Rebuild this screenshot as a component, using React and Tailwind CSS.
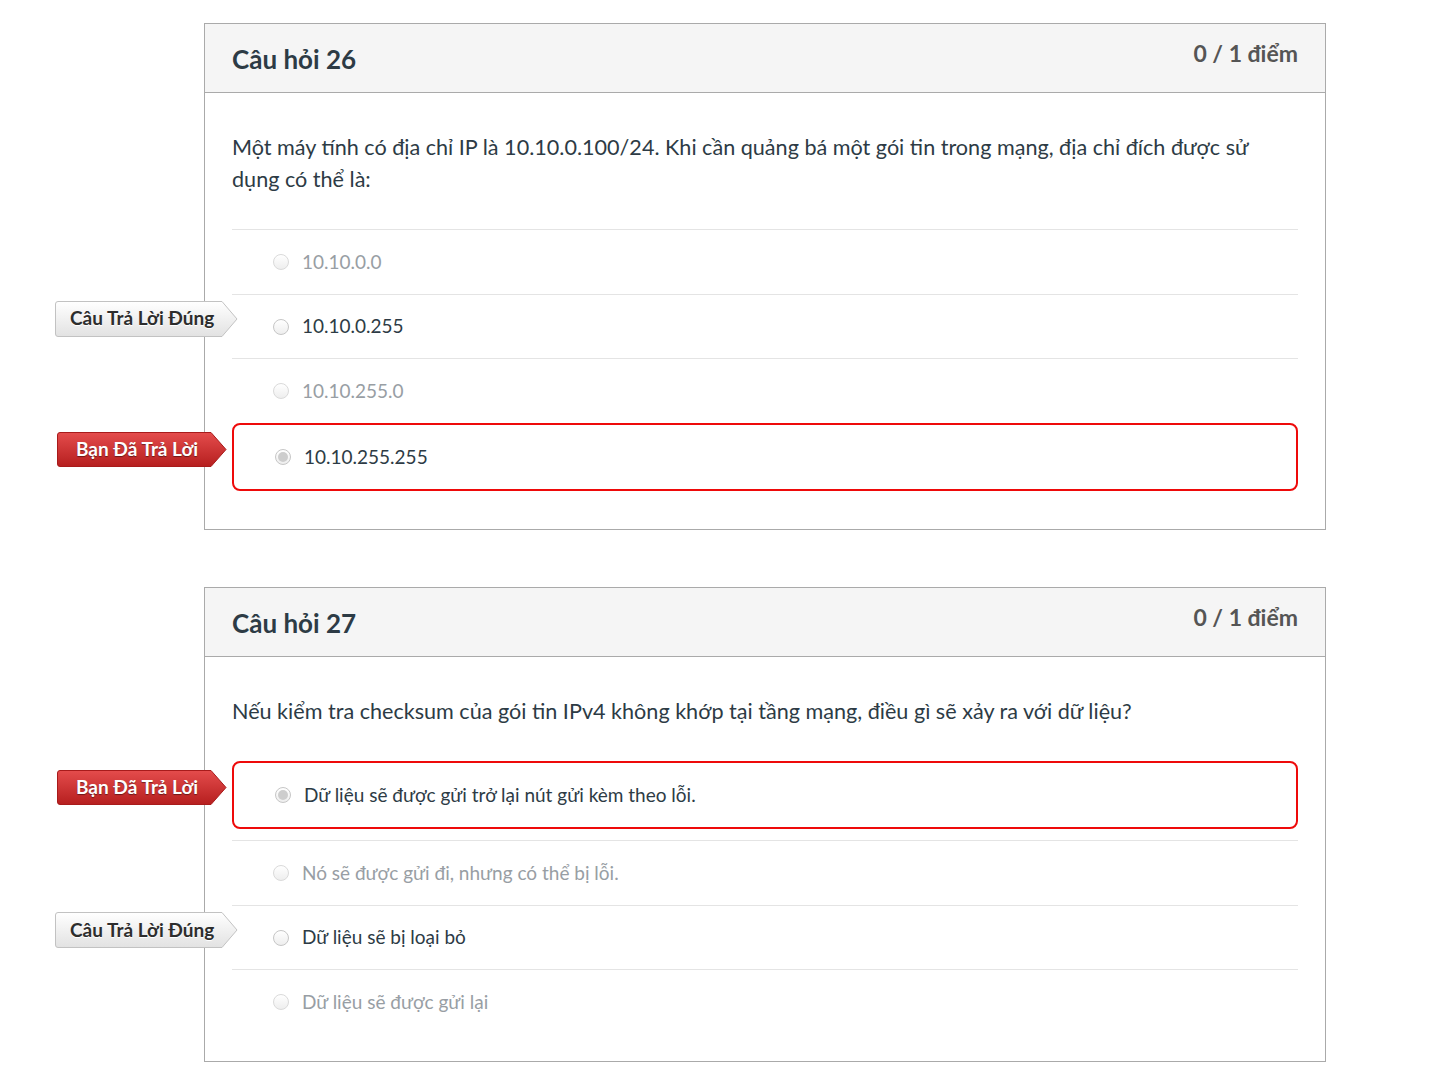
import React from 'react'

const questions = [
  {
    title: 'Câu hỏi 26',
    text: 'Một máy tính có địa chỉ IP là 10.10.0.100/24. Khi cần quảng bá một gói tin trong mạng, địa chỉ đích được sử dụng có thể là:',
    answers: [
      { text: '10.10.0.0' },
      { text: '10.10.0.255', correct: true },
      { text: '10.10.255.0' },
      { text: '10.10.255.255', picked: true },
    ],
  },
  {
    title: 'Câu hỏi 27',
    text: 'Nếu kiểm tra checksum của gói tin IPv4 không khớp tại tầng mạng, điều gì sẽ xảy ra với dữ liệu?',
    answers: [
      { text: 'Dữ liệu sẽ được gửi trở lại nút gửi kèm theo lỗi.', picked: true },
      { text: 'Nó sẽ được gửi đi, nhưng có thể bị lỗi.' },
      { text: 'Dữ liệu sẽ bị loại bỏ', correct: true },
      { text: 'Dữ liệu sẽ được gửi lại' },
    ],
  },
]

function Tag({ red }) {
  const w = red ? 170 : 183
  const h = red ? 35 : 36
  const body = w - 16
  const id = red ? 'tagRed' : 'tagGray'
  return (
    <div
      className={`absolute left-[-177px] flex items-center ${red ? 'top-[7px]' : 'top-[6px]'}`}
      style={{ width: w, height: h }}
    >
      {/* arrow-shaped badge background */}
      <svg className="absolute inset-0" width={w} height={h} viewBox={`0 0 ${w} ${h}`}>
        <defs>
          <linearGradient id={id} x1="0" y1="0" x2="0" y2="1">
            <stop offset="0" stopColor={red ? '#e44c4c' : '#ffffff'} />
            <stop offset="1" stopColor={red ? '#b61f1f' : '#e2e2e2'} />
          </linearGradient>
        </defs>
        <path
          d={`M3 0.5 H${body} L${w - 1} ${h / 2} L${body} ${h - 0.5} H3 Q0.5 ${h - 0.5} 0.5 ${h - 3} V3 Q0.5 0.5 3 0.5 Z`}
          fill={`url(#${id})`}
          stroke={red ? '#a81b1b' : '#c2c2c2'}
          strokeWidth="1"
        />
      </svg>
      <span
        className={
          red
            ? 'relative pl-[19px] text-[19px] font-bold text-white [text-shadow:0_1px_1px_rgba(0,0,0,0.45)]'
            : 'relative pl-[15px] text-[19px] font-bold text-[#2d2d2d] [text-shadow:0_1px_0_#fff]'
        }
      >
        {red ? 'Bạn Đã Trả Lời' : 'Câu Trả Lời Đúng'}
      </span>
    </div>
  )
}

function Radio({ checked, faded }) {
  return (
    <div
      className={`w-[16px] h-[16px] rounded-full border flex items-center justify-center shrink-0 bg-gradient-to-b from-white to-[#eeeeee] ${
        faded ? 'border-[#dadada]' : 'border-[#c6c6c6]'
      }`}
    >
      {checked && <div className="w-[10px] h-[10px] rounded-full bg-[#cdcdcd]" />}
    </div>
  )
}

function Answer({ answer }) {
  const faded = !answer.correct && !answer.picked
  if (answer.picked) {
    return (
      <div className="relative h-[68px] mb-[11px] border-2 border-[#ee0a0a] rounded-[8px] flex items-center pl-[41px] gap-[13px]">
        <Tag red />
        <Radio checked />
        <span className="text-[19px] text-[#2d3b45]">{answer.text}</span>
      </div>
    )
  }
  return (
    <div className="relative h-[64.7px] border-t border-[#e4e4e4] flex items-center pl-[41px] gap-[13px]">
      {answer.correct && <Tag />}
      <Radio faded={faded} />
      <span className={`text-[19px] ${faded ? 'text-[#989ea4]' : 'text-[#2d3b45]'}`}>{answer.text}</span>
    </div>
  )
}

export default function App() {
  return (
    <div className="min-h-screen bg-white pt-[23px]" style={{ fontFamily: 'Lato, "Noto Sans", sans-serif' }}>
      <div className="ml-[204px] w-[1122px] flex flex-col gap-[57px]">
        {questions.map((q) => (
          <div key={q.title} className="border border-[#aaaaaa] bg-white">
            {/* Header */}
            <div className="h-[68.5px] bg-[#f5f5f5] border-b border-[#aaaaaa] flex justify-between items-start px-[27px]">
              <h2 className="pt-[19px] text-[26px] leading-[32px] font-bold text-[#2d3b45]">{q.title}</h2>
              <span className="pt-[15px] text-[23px] leading-[28px] font-bold text-[#555555]">0 / 1 điểm</span>
            </div>

            {/* Body */}
            <div className="px-[27px] pt-[38.5px] pb-[27px]">
              <p className="text-[21.6px] leading-[32px] text-[#2d3b45] pr-[12px]">{q.text}</p>
              <div className="mt-[34px]">
                {q.answers.map((a) => (
                  <Answer key={a.text} answer={a} />
                ))}
              </div>
            </div>
          </div>
        ))}
      </div>
    </div>
  )
}
